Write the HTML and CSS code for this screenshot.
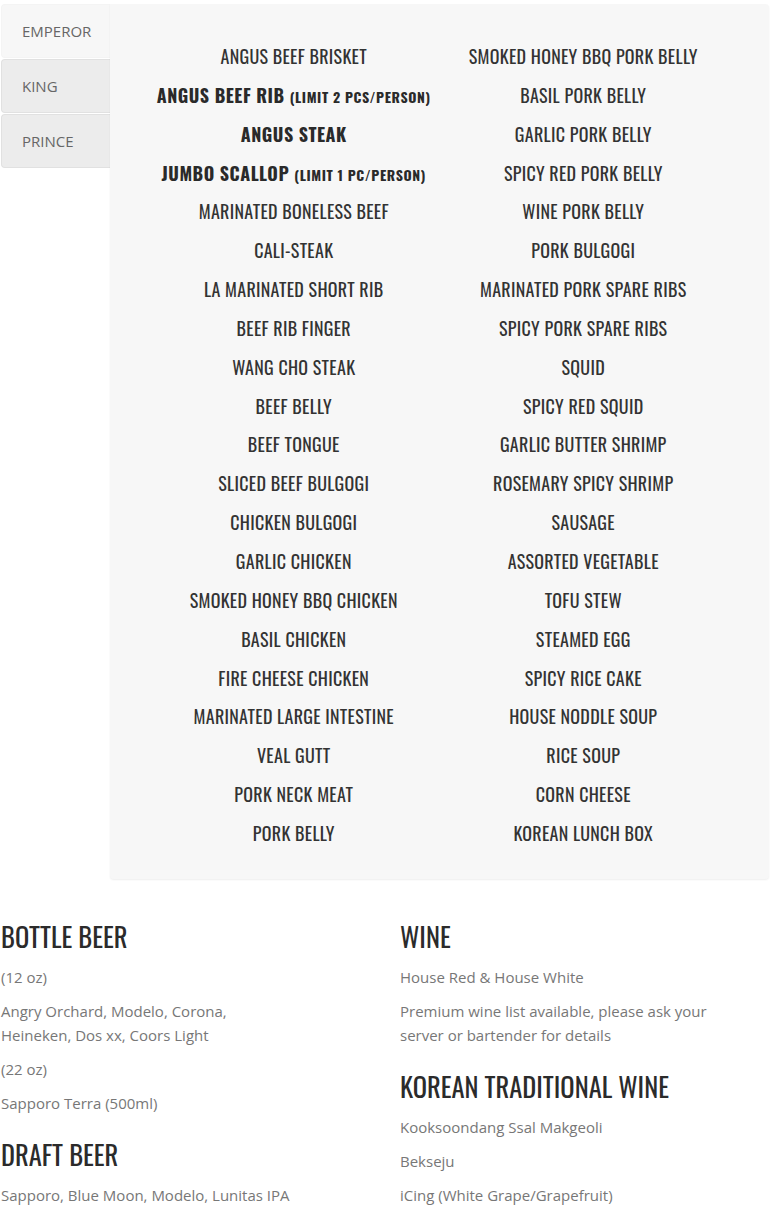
FILE: index.html
```html
<!DOCTYPE html>
<html lang="en">
<head>
<meta charset="utf-8">
<title>Menu</title>
<link rel="stylesheet" href="styles.css">
</head>
<body>
<section class="menu-tabs">
  <nav class="tabs">
    <a class="tab active">EMPEROR</a>
    <a class="tab">KING</a>
    <a class="tab">PRINCE</a>
  </nav>
  <div class="panel">
    <ul class="col">
      <li class="item">ANGUS BEEF BRISKET</li>
      <li class="item strong">ANGUS BEEF RIB <small>(LIMIT 2 PCS/PERSON)</small></li>
      <li class="item strong">ANGUS STEAK</li>
      <li class="item strong">JUMBO SCALLOP <small>(LIMIT 1 PC/PERSON)</small></li>
      <li class="item">MARINATED BONELESS BEEF</li>
      <li class="item">CALI-STEAK</li>
      <li class="item">LA MARINATED SHORT RIB</li>
      <li class="item">BEEF RIB FINGER</li>
      <li class="item">WANG CHO STEAK</li>
      <li class="item">BEEF BELLY</li>
      <li class="item">BEEF TONGUE</li>
      <li class="item">SLICED BEEF BULGOGI</li>
      <li class="item">CHICKEN BULGOGI</li>
      <li class="item">GARLIC CHICKEN</li>
      <li class="item">SMOKED HONEY BBQ CHICKEN</li>
      <li class="item">BASIL CHICKEN</li>
      <li class="item">FIRE CHEESE CHICKEN</li>
      <li class="item">MARINATED LARGE INTESTINE</li>
      <li class="item">VEAL GUTT</li>
      <li class="item">PORK NECK MEAT</li>
      <li class="item">PORK BELLY</li>
    </ul>
    <ul class="col">
      <li class="item">SMOKED HONEY BBQ PORK BELLY</li>
      <li class="item">BASIL PORK BELLY</li>
      <li class="item">GARLIC PORK BELLY</li>
      <li class="item">SPICY RED PORK BELLY</li>
      <li class="item">WINE PORK BELLY</li>
      <li class="item">PORK BULGOGI</li>
      <li class="item">MARINATED PORK SPARE RIBS</li>
      <li class="item">SPICY PORK SPARE RIBS</li>
      <li class="item">SQUID</li>
      <li class="item">SPICY RED SQUID</li>
      <li class="item">GARLIC BUTTER SHRIMP</li>
      <li class="item">ROSEMARY SPICY SHRIMP</li>
      <li class="item">SAUSAGE</li>
      <li class="item">ASSORTED VEGETABLE</li>
      <li class="item">TOFU STEW</li>
      <li class="item">STEAMED EGG</li>
      <li class="item">SPICY RICE CAKE</li>
      <li class="item">HOUSE NODDLE SOUP</li>
      <li class="item">RICE SOUP</li>
      <li class="item">CORN CHEESE</li>
      <li class="item">KOREAN LUNCH BOX</li>
    </ul>
  </div>
</section>

<section class="drinks">
  <div class="drink-col">
    <h2>BOTTLE BEER</h2>
    <p>(12 oz)</p>
    <p>Angry Orchard, Modelo, Corona,<br>Heineken, Dos xx, Coors Light</p>
    <p>(22 oz)</p>
    <p>Sapporo Terra (500ml)</p>
    <h2>DRAFT BEER</h2>
    <p>Sapporo, Blue Moon, Modelo, Lunitas IPA</p>
  </div>
  <div class="drink-col right">
    <h2>WINE</h2>
    <p>House Red &amp; House White</p>
    <p>Premium wine list available, please ask your server or bartender for details</p>
    <h2>KOREAN TRADITIONAL WINE</h2>
    <p>Kooksoondang Ssal Makgeoli</p>
    <p>Bekseju</p>
    <p>iCing (White Grape/Grapefruit)</p>
    <p>Soonhari (Peach/Apple)</p>
  </div>
</section>
</body>
</html>
```

FILE: styles.css
```css
html, body {
  margin: 0;
  padding: 0;
  background: #ffffff;
}

body {
  font-family: "Open Sans", "Liberation Sans", sans-serif;
  color: #777777;
  width: 770px;
  overflow: hidden;
}

.menu-tabs {
  display: flex;
  align-items: flex-start;
  padding: 4px 1px 0 1px;
}

.tabs {
  width: 109px;
  flex: none;
  display: flex;
  flex-direction: column;
}

.tab {
  display: block;
  box-sizing: border-box;
  height: 54px;
  line-height: 52px;
  padding-left: 20px;
  margin-bottom: 1px;
  font-size: 15px;
  color: #666666;
  background: #ececec;
  border: 1px solid #e1e1e1;
  border-right: none;
  border-radius: 4px 0 0 4px;
}

.tab.active {
  background: #f7f7f7;
  border-color: #f4f4f4;
}

.panel {
  flex: 1;
  display: grid;
  grid-template-columns: 1fr 1fr;
  box-sizing: border-box;
  height: 875px;
  padding: 38px 41px 0 39px;
  background: #f7f7f7;
  border-radius: 0 4px 4px 4px;
  box-shadow: 0 1px 2px rgba(0, 0, 0, 0.07);
}

.col {
  list-style: none;
  margin: 0;
  padding: 0;
  display: flex;
  flex-direction: column;
  gap: 10px;
}

.item {
  height: 28.85px;
  text-align: center;
  line-height: 28.85px;
  font-family: "Oswald", "Liberation Sans Narrow", "DejaVu Sans Condensed", sans-serif;
  font-size: 18px;
  letter-spacing: 0.3px;
  color: #333333;
  white-space: nowrap;
}

.item.strong {
  font-weight: bold;
  letter-spacing: 0.5px;
  color: #2a2a2a;
}

.item small {
  font-size: 14px;
  line-height: 1;
  letter-spacing: 0.6px;
}

.drinks {
  display: grid;
  grid-template-columns: 399px 1fr;
  padding: 18px 0 0 1px;
}

.drink-col.right {
  padding-right: 30px;
}

.drinks h2 {
  margin: 24px 0 14px;
  font-family: "Oswald", "Liberation Sans Narrow", "DejaVu Sans Condensed", sans-serif;
  font-weight: normal;
  font-size: 26.5px;
  line-height: 30px;
  color: #2b2b2b;
}

.drinks p {
  margin: 0 0 10px;
  font-size: 15px;
  line-height: 24px;
  color: #777777;
}
```
